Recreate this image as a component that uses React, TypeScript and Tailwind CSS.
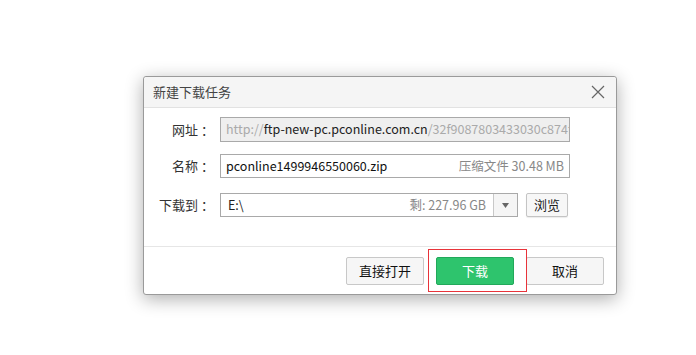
const FONT = "font-['Noto_Sans_CJK_SC','Noto_Sans',sans-serif]";

function Label({ children }: { children: React.ReactNode }) {
  return <div className="w-[70px] shrink-0 text-right text-[13px] text-[#333]">{children}</div>;
}

export default function App() {
  return (
    <div className={`min-h-[355px] w-[696px] bg-white pt-[76px] pl-[143px] ${FONT}`}>
      <div className="flex w-[474px] flex-col rounded-[3px] border border-[#9a9a9a] bg-white shadow-[0_4px_18px_rgba(0,0,0,0.32)]">
        {/* 标题栏 */}
        <div className="flex h-[31px] items-center justify-between rounded-t-[3px] border-b border-[#e2e2e2] bg-[#f5f5f5] pl-[9px] pr-[9px]">
          <span className="text-[13px] text-[#444]">新建下载任务</span>
          <svg width="14" height="14" viewBox="0 0 14 14" className="mr-[2px]">
            <path d="M1 1L13 13M13 1L1 13" stroke="#666" strokeWidth="1.2" fill="none" />
          </svg>
        </div>

        {/* 表单 */}
        <div className="flex flex-col pt-[9px] pb-[29px]">
          <div className="flex items-center">
            <Label>网址 ：</Label>
            <div className="ml-[6px] flex h-[25px] w-[350px] items-center overflow-hidden whitespace-nowrap border border-[#a9a9a9] bg-[#efefef] px-[5px] text-[12.5px]">
              <span className="text-[#aaa]">http://</span>
              <span className="text-[#222]">ftp-new-pc.pconline.com.cn</span>
              <span className="text-[#aaa]">/32f9087803433030c874f</span>
            </div>
          </div>

          <div className="mt-[12px] flex items-center">
            <Label>名称 ：</Label>
            <div className="ml-[6px] flex h-[24px] w-[350px] items-center justify-between whitespace-nowrap border border-[#a9a9a9] bg-white px-[5px] text-[12.5px]">
              <span className="text-[#111]">pconline1499946550060.zip</span>
              <span className="text-[#888]">压缩文件 30.48 MB</span>
            </div>
          </div>

          <div className="mt-[15px] flex items-center">
            <Label>下载到 ：</Label>
            <div className="ml-[6px] flex h-[24px] w-[298px] items-stretch border border-[#a9a9a9] bg-white text-[12.5px]">
              <div className="flex flex-1 items-center justify-between px-[7px]">
                <span className="text-[#222]">E:\</span>
                <span className="text-[#888]">剩: 227.96 GB</span>
              </div>
              <div className="flex w-[24px] items-center justify-center border-l border-[#c8c8c8] bg-[#f5f5f5]">
                <svg width="7" height="5" viewBox="0 0 7 5">
                  <path d="M0 0H7L3.5 5Z" fill="#666" />
                </svg>
              </div>
            </div>
            <button className="ml-[8px] flex h-[24px] w-[42px] items-center justify-center rounded-[2px] border border-[#c4c4c4] bg-[#f7f7f7] text-[13px] text-[#222] shadow-[0_1px_1px_rgba(0,0,0,0.08)]">
              浏览
            </button>
          </div>
        </div>

        {/* 底部按钮 */}
        <div className="flex justify-end gap-[12px] border-t border-[#e6e6e6] pt-[10px] pr-[12px] pb-[9px]">
          <button className="flex h-[28px] w-[78px] items-center justify-center rounded-[2px] border border-[#c8c8c8] bg-[#f6f6f6] text-[13px] text-[#111]">
            直接打开
          </button>
          <div className="relative">
            <button className="flex h-[28px] w-[78px] items-center justify-center rounded-[2px] border border-[#22a85a] bg-[#2ec46d] text-[13px] text-white">
              下载
            </button>
            <div className="pointer-events-none absolute -top-[8px] -left-[8px] -right-[13px] -bottom-[7px] border border-[#e8333a]" />
          </div>
          <button className="flex h-[28px] w-[78px] items-center justify-center rounded-[2px] border border-[#c8c8c8] bg-[#f6f6f6] text-[13px] text-[#111]">
            取消
          </button>
        </div>
      </div>
    </div>
  );
}
